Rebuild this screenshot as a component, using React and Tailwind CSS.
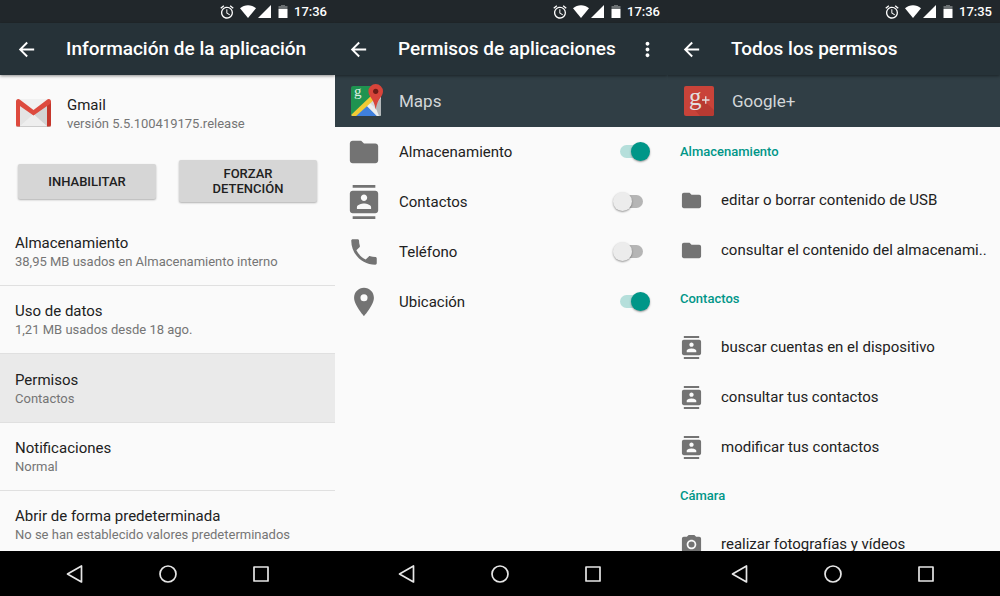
import React, { useState } from "react";
import {
  MdAccessAlarm,
  MdArrowBack,
  MdContacts,
  MdFolder,
  MdMoreVert,
  MdPhone,
  MdPhotoCamera,
  MdPlace,
} from "react-icons/md";

const appInfo = [
  { title: "Almacenamiento", detail: "38,95 MB usados en Almacenamiento interno" },
  { title: "Uso de datos", detail: "1,21 MB usados desde 18 ago." },
  { title: "Permisos", detail: "Contactos", active: true },
  { title: "Notificaciones", detail: "Normal" },
  { title: "Abrir de forma predeterminada", detail: "No se han establecido valores predeterminados" },
];

const mapsPermissions = [
  { name: "Almacenamiento", icon: MdFolder, on: true },
  { name: "Contactos", icon: MdContacts, on: false },
  { name: "Teléfono", icon: MdPhone, on: false },
  { name: "Ubicación", icon: MdPlace, on: true },
];

const allPermissions = [
  {
    group: "Almacenamiento",
    icon: MdFolder,
    items: ["editar o borrar contenido de USB", "consultar el contenido del almacenami.."],
  },
  {
    group: "Contactos",
    icon: MdContacts,
    items: ["buscar cuentas en el dispositivo", "consultar tus contactos", "modificar tus contactos"],
  },
  {
    group: "Cámara",
    icon: MdPhotoCamera,
    items: ["realizar fotografías y vídeos"],
  },
];

function GmailLogo() {
  return (
    <svg viewBox="0 0 35 28" className="w-[35px] h-7 mt-1" aria-hidden="true">
      <rect x="0" y="0" width="35" height="28" rx="2" fill="#e4e4e4" />
      <path d="M4 27 17.500 15 31 27z" fill="#eeeeee" />
      <path d="M17.500 15 31 4v23z" fill="#d3d3d3" />
      <path d="M4 2 17.500 12 31 2 33 0H2z" fill="#f1f1f1" />
      <path d="M0 2v24a2 2 0 0 0 2 2h2V5z" fill="#de4a3e" />
      <path d="M35 2v24a2 2 0 0 1-2 2h-2V5z" fill="#c5372c" />
      <path d="M0 2.500C0 .300 2.300-.600 4 .700L17.500 11 31 .700c1.700-1.300 4-.400 4 1.800 0 1.200-.500 2-1.400 2.700L17.500 16.500 1.400 5.200C.500 4.500 0 3.700 0 2.500z" fill="#dd4b3f" />
      <path d="M1 27.600h33" stroke="#b9b9b9" strokeWidth=".6" />
    </svg>
  );
}

function MapsLogo() {
  return (
    <svg viewBox="-2 0 34 34" className="size-[34px]" aria-hidden="true">
      <defs>
        <clipPath id="tile">
          <rect x="0" y="2" width="30" height="30" rx="2" />
        </clipPath>
      </defs>
      <g clipPath="url(#tile)">
        <rect x="0" y="2" width="30" height="30" fill="#1f9350" />
        <path d="M0 32 30 4v28z" fill="#d5d8d9" />
        <path d="M4 32 15 21l11 11z" fill="#3f80dd" />
        <path d="M15 21l3-3 12 12v2h-4z" fill="#eceeee" />
        <path d="M24 22 30 14v18h-2z" fill="#b4b8ba" />
        <path d="M-2 33 21 11l3 4L4 33z" fill="#f0ca35" />
      </g>
      <text x="3" y="12" fill="#dfeee5" fontSize="15" fontFamily="Liberation Serif, serif">g</text>
      <path d="M24.700 0a7.300 7.300 0 0 0-7.300 7.300c0 5.500 5.800 7.700 7.300 18.200 1.500-10.500 7.300-12.700 7.300-18.200A7.300 7.300 0 0 0 24.700 0z" fill="#d8443a" />
      <circle cx="24.700" cy="7.300" r="2.600" fill="#6e1c17" />
    </svg>
  );
}

function PlusLogo() {
  return (
    <svg viewBox="0 0 34 34" className="size-[34px]" aria-hidden="true">
      <rect x="2" y="2" width="30" height="30" rx="2" fill="#c94339" />
      <path d="M13 26 19 14l13 12v4a2 2 0 0 1-2 2H18z" fill="#b83a32" />
      <text x="7" y="21" fill="#e3dfdf" fontSize="25" fontFamily="Liberation Serif, serif">g</text>
      <path d="M20 16h7.500M23.750 12.250v7.500" stroke="#e3dfdf" strokeWidth="1.300" />
    </svg>
  );
}

function StatusBar({ time }) {
  return (
    <div className="h-[23px] shrink-0 bg-[#21272b] text-white flex items-center justify-end pr-2">
      <MdAccessAlarm className="size-4" />
      <svg viewBox="0 0 16 13" className="w-4 h-[13px] ml-[5px]" aria-hidden="true">
        <path d="M0 3.200C4.500-.800 11.500-.800 16 3.200L8 13z" fill="currentColor" />
      </svg>
      <svg viewBox="0 0 13 13" className="size-[13px] ml-0.5" aria-hidden="true">
        <path d="M13 0v13H0z" fill="currentColor" />
      </svg>
      <svg viewBox="0 0 10 13" className="w-2.5 h-[13px] ml-[7px]" aria-hidden="true">
        <path d="M3 0h4v1h2.500v3h-9V1H3z" fill="#6c7173" />
        <path d="M.500 4h9v9h-9z" fill="currentColor" />
      </svg>
      <span className="ml-1.5 text-[13px] leading-5 font-medium">{time}</span>
    </div>
  );
}

function Toolbar({ title, menu }) {
  return (
    <header className="h-[52px] shrink-0 relative bg-[#263238] text-white flex items-center pl-[15px] pr-[9px] shadow-[0_1px_3px_rgba(0,0,0,0.45)]">
      <button type="button" aria-label="Atrás">
        <MdArrowBack className="size-[23px]" />
      </button>
      <h1 className="ml-7 flex-1 text-[19px] leading-6 font-medium whitespace-nowrap">{title}</h1>
      {menu && (
        <button type="button" aria-label="Más opciones">
          <MdMoreVert className="size-[23px]" />
        </button>
      )}
    </header>
  );
}

function NavBar() {
  return (
    <nav className="h-[45px] shrink-0 bg-black text-[#e6e6e6] flex items-center justify-center gap-[69px]">
      <button type="button" aria-label="Volver">
        <svg viewBox="0 0 24 24" className="size-6" fill="none" stroke="currentColor" strokeWidth="1.700" strokeLinejoin="round">
          <path d="M18.500 4v16L4.500 12z" />
        </svg>
      </button>
      <button type="button" aria-label="Inicio">
        <svg viewBox="0 0 24 24" className="size-6" fill="none" stroke="currentColor" strokeWidth="1.700">
          <circle cx="12" cy="12" r="8" />
        </svg>
      </button>
      <button type="button" aria-label="Recientes">
        <svg viewBox="0 0 24 24" className="size-6" fill="none" stroke="currentColor" strokeWidth="1.700" strokeLinejoin="round">
          <rect x="5" y="5" width="14" height="14" />
        </svg>
      </button>
    </nav>
  );
}

function Phone({ time, title, menu, joined, children }) {
  return (
    <section className="h-screen min-w-0 overflow-hidden bg-[#fafafa]">
      <div className={"h-full flex flex-col " + (joined ? "-ml-[3px]" : "")}>
        <StatusBar time={time} />
        <Toolbar title={title} menu={menu} />
        <div className="flex-1 min-h-0 overflow-hidden">{children}</div>
        <NavBar />
      </div>
    </section>
  );
}

function AppBand({ logo, name }) {
  return (
    <div className="h-[52px] bg-[#303e45] flex items-center gap-4 pl-[17px]">
      {logo}
      <h2 className="text-[17px] leading-6 text-[#d3d7d9]">{name}</h2>
    </div>
  );
}

function PermissionSwitch({ name, icon: Icon, on }) {
  const [checked, setChecked] = useState(on);
  return (
    <label className="h-[50px] flex items-center pl-[15px] pr-[18px]">
      <Icon className="size-[34px] text-[#737373]" />
      <span className="ml-[18px] flex-1 text-[15px] leading-5">{name}</span>
      <input
        type="checkbox"
        role="switch"
        checked={checked}
        onChange={(e) => setChecked(e.target.checked)}
        className="appearance-none relative w-[37px] h-5 before:absolute before:left-[7px] before:top-[3px] before:w-[23px] before:h-[13px] before:rounded-full before:bg-[#b5b5b5] after:absolute after:left-0 after:top-0 after:size-[19px] after:rounded-full after:bg-[#ececec] after:shadow-[0_1px_2px_rgba(0,0,0,0.4)] checked:before:bg-[#b5dfdb] checked:after:left-[18px] checked:after:bg-[#009688]"
      />
    </label>
  );
}

export default function App() {
  return (
    <main className="grid grid-cols-[335fr_333fr_332fr] font-[Roboto,sans-serif] text-[#212121]">
      <Phone time="17:36" title="Información de la aplicación">
        <div className="flex items-start gap-4 pl-4 pt-5">
          <GmailLogo />
          <div>
            <h2 className="text-[15px] leading-5">Gmail</h2>
            <p className="text-[13px] leading-[18px] text-[#757575]">versión 5.5.100419175.release</p>
          </div>
        </div>
        <div className="grid grid-cols-2 items-center gap-[23px] px-[18px] mt-[27px] mb-4">
          <button type="button" className="h-[35px] rounded-xs bg-[#d6d6d6] text-[13px] leading-[15px] font-medium shadow-[0_1px_2px_rgba(0,0,0,0.3)]">
            INHABILITAR
          </button>
          <button type="button" className="h-[42px] px-6 rounded-xs bg-[#d6d6d6] text-[13px] leading-[15px] font-medium shadow-[0_1px_2px_rgba(0,0,0,0.3)]">
            FORZAR DETENCIÓN
          </button>
        </div>
        <ul>
          {appInfo.map((row) => (
            <li
              key={row.title}
              className={
                "pl-[15px] border-b border-[#e0e0e0] " +
                (row.active ? "h-[69px] pt-4 bg-[#eaeaea]" : "h-[68px] pt-[15px]")
              }
            >
              <h3 className="text-[15px] leading-5">{row.title}</h3>
              <p className="text-[13px] leading-[18px] text-[#757575]">{row.detail}</p>
            </li>
          ))}
        </ul>
      </Phone>

      <Phone time="17:36" title="Permisos de aplicaciones" menu joined>
        <AppBand logo={<MapsLogo />} name="Maps" />
        {mapsPermissions.map((p) => (
          <PermissionSwitch key={p.name} {...p} />
        ))}
      </Phone>

      <Phone time="17:35" title="Todos los permisos" joined>
        <AppBand logo={<PlusLogo />} name="Google+" />
        <div className="pt-px">
          {allPermissions.map(({ group, icon: Icon, items }) => (
            <div key={group}>
              <h3 className="h-[47px] flex items-center pl-[15px] text-[13px] leading-[18px] font-medium text-[#009688]">
                {group}
              </h3>
              <ul>
                {items.map((item) => (
                  <li key={item} className="h-[50px] flex items-center gap-[18px] pl-[15px]">
                    <Icon className="size-[23px] shrink-0 text-[#737373]" />
                    <span className="text-[15px] leading-5 whitespace-nowrap">{item}</span>
                  </li>
                ))}
              </ul>
            </div>
          ))}
        </div>
      </Phone>
    </main>
  );
}
